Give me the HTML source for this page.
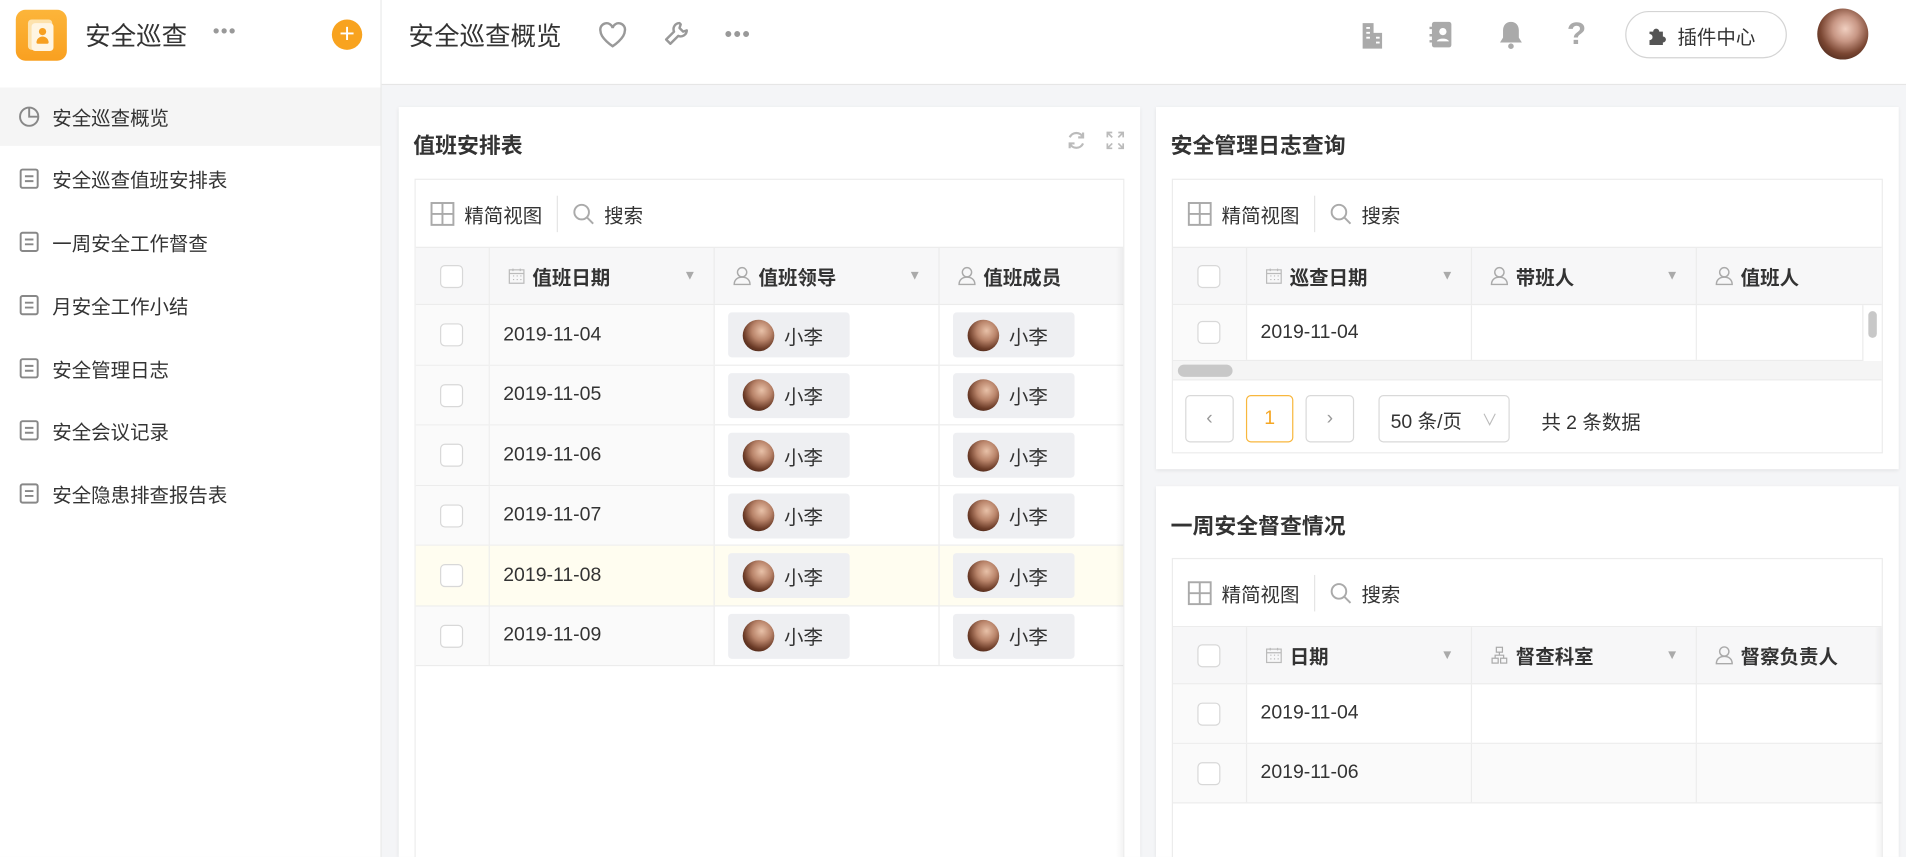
<!DOCTYPE html>
<html><head><meta charset="utf-8">
<style>
*{box-sizing:border-box;margin:0;padding:0}
html,body{width:1906px;height:857px;overflow:hidden;background:#f4f5f7}
body{font-family:"Liberation Sans","Noto Sans CJK SC",sans-serif;color:#333;position:relative}
#w{position:absolute;left:0;top:0;width:1568px;height:705px;transform:scale(1.21556);transform-origin:0 0;background:#f4f5f7;overflow:hidden}
.a{position:absolute}
.side{left:0;top:0;width:314px;height:705px;background:#fff;border-right:1px solid #e8e8e8}
.top{left:314px;top:0;width:1254px;height:70px;background:#fff;border-bottom:1px solid #e6e6e6}
.item{position:absolute;left:0;width:313px;height:48px;display:flex;align-items:center;font-size:16px;color:#333}
.item .ic{margin-left:15px;width:18px;height:18px;margin-right:10px}
.card{background:#fff;box-shadow:0 1px 3px rgba(0,0,0,.08);overflow:hidden}
.ct{font-size:18px;font-weight:bold;color:#333}
.tb{border:1px solid #ececec;background:#fff;overflow:hidden}
.tool{height:56px;display:flex;align-items:center;font-size:16px;color:#333;border-bottom:1px solid #ececec}
.hd{background:#f7f7f8;font-size:16px;font-weight:bold;color:#333}
.cell{position:absolute;top:0;height:100%;border-right:1px solid #ececec;display:flex;align-items:center}
.row{position:absolute;left:0;border-bottom:1px solid #ececec}
.cb{width:19px;height:19px;border:1px solid #d8d8d8;border-radius:4px;background:#fff;margin-left:20px}
.chip{display:flex;align-items:center;background:#eeeff2;border-radius:3px;height:37px;width:100px;margin-left:11px;font-size:16px}
.av{width:26px;height:26px;border-radius:50%;background:radial-gradient(circle at 60% 35%,#e8c1a8 0,#b9846a 35%,#6b3b27 65%,#2a140c 100%);margin:0 8px 0 12px}
.dt{font-size:16px;color:#333;margin-left:11px}
.pg{position:absolute;top:12px;height:39px;border:1px solid #d9d9d9;border-radius:4px;display:flex;align-items:center;justify-content:center;color:#999;font-size:16px}
.pi{margin-left:15px;width:15px;height:16px}
.ca{margin-left:15px;width:14px;height:14px}
</style></head><body><div id="w">

<div class="a side">
 <div class="a" style="left:13px;top:8px;width:42px;height:42px;border-radius:8px;background:linear-gradient(#fcb53a,#f9a020)">
  <div class="a" style="left:10px;top:8px;width:20px;height:25px;background:#fde2ad;border-radius:3px"></div>
  <div class="a" style="left:13px;top:11px;width:18px;height:23px;background:#fff5e2;border-radius:3px"></div>
  <div class="a" style="left:19px;top:15px;width:6px;height:6px;border-radius:50%;background:#f7a021"></div>
  <div class="a" style="left:17px;top:22px;width:10px;height:6px;border-radius:5px 5px 1px 1px;background:#f7a021"></div>
 </div>
 <div class="a" style="left:70px;top:14px;font-size:21px;color:#333">安全巡查</div>
 <div class="a" style="left:175px;top:22px;font-size:16px;color:#999;letter-spacing:1px;line-height:10px">•••</div>
 <div class="a" style="left:273px;top:16px;width:25px;height:25px;border-radius:50%;background:#f8a31f;color:#fff;font-size:22px;line-height:24px;text-align:center">+</div>
 <div class="item" style="top:72px;background:#f5f5f5"><svg class="ic" viewBox="0 0 18 18"><circle cx="9" cy="9" r="7.5" fill="none" stroke="#888" stroke-width="1.6"/><path d="M9 1.5V9H16.5" fill="none" stroke="#888" stroke-width="1.6"/></svg>安全巡查概览</div>
 <div class="item" style="top:123px"><svg class="ic" viewBox="0 0 18 18"><rect x="2" y="1.5" width="14" height="15" rx="1.5" fill="none" stroke="#888" stroke-width="1.6"/><path d="M5.5 7h7M5.5 11h7" stroke="#888" stroke-width="1.6"/></svg>安全巡查值班安排表</div>
 <div class="item" style="top:175px"><svg class="ic" viewBox="0 0 18 18"><rect x="2" y="1.5" width="14" height="15" rx="1.5" fill="none" stroke="#888" stroke-width="1.6"/><path d="M5.5 7h7M5.5 11h7" stroke="#888" stroke-width="1.6"/></svg>一周安全工作督查</div>
 <div class="item" style="top:227px"><svg class="ic" viewBox="0 0 18 18"><rect x="2" y="1.5" width="14" height="15" rx="1.5" fill="none" stroke="#888" stroke-width="1.6"/><path d="M5.5 7h7M5.5 11h7" stroke="#888" stroke-width="1.6"/></svg>月安全工作小结</div>
 <div class="item" style="top:279px"><svg class="ic" viewBox="0 0 18 18"><rect x="2" y="1.5" width="14" height="15" rx="1.5" fill="none" stroke="#888" stroke-width="1.6"/><path d="M5.5 7h7M5.5 11h7" stroke="#888" stroke-width="1.6"/></svg>安全管理日志</div>
 <div class="item" style="top:330px"><svg class="ic" viewBox="0 0 18 18"><rect x="2" y="1.5" width="14" height="15" rx="1.5" fill="none" stroke="#888" stroke-width="1.6"/><path d="M5.5 7h7M5.5 11h7" stroke="#888" stroke-width="1.6"/></svg>安全会议记录</div>
 <div class="item" style="top:382px"><svg class="ic" viewBox="0 0 18 18"><rect x="2" y="1.5" width="14" height="15" rx="1.5" fill="none" stroke="#888" stroke-width="1.6"/><path d="M5.5 7h7M5.5 11h7" stroke="#888" stroke-width="1.6"/></svg>安全隐患排查报告表</div>
</div>

<div class="a top">
 <div class="a" style="left:22px;top:14px;font-size:21px;color:#333">安全巡查概览</div>
 <svg class="a" style="left:178px;top:18px" width="24" height="22" viewBox="0 0 24 22"><path d="M12 20S2 13.5 2 7.5A5 5 0 0 1 12 5a5 5 0 0 1 10 2.5C22 13.5 12 20 12 20z" fill="none" stroke="#999" stroke-width="2"/></svg>
 <svg class="a" style="left:231px;top:17px" width="22" height="22" viewBox="0 0 22 22"><path d="M14 2a5 5 0 0 0-4.5 7L3 15.5 6.5 19 13 12.5A5 5 0 0 0 20 8l-3 1-3-3 1-3z" fill="none" stroke="#999" stroke-width="2" stroke-linejoin="round"/></svg>
 <div class="a" style="left:282px;top:23px;font-size:18px;color:#999;letter-spacing:1px;line-height:10px">•••</div>
 <svg class="a" style="left:804px;top:16px" width="22" height="25" viewBox="0 0 22 25"><path d="M3 24V3h9v8h7v13z" fill="#aaa"/><path d="M6 7h3M6 11h3M6 15h3M14 15h3M14 19h3" stroke="#fff" stroke-width="1.5"/></svg>
 <svg class="a" style="left:862px;top:17px" width="20" height="23" viewBox="0 0 20 23"><rect x="2" y="1" width="16" height="21" rx="2" fill="#aaa"/><circle cx="11" cy="9" r="3" fill="#fff"/><path d="M6 17c1-3 9-3 10 0" fill="#fff"/><path d="M0 6h4M0 12h4M0 17h4" stroke="#aaa" stroke-width="2"/></svg>
 <svg class="a" style="left:918px;top:16px" width="22" height="25" viewBox="0 0 22 25"><path d="M11 2c-4 0-6.5 3-6.5 7v6L2 19h18l-2.5-4V9c0-4-2.5-7-6.5-7z" fill="#aaa"/><circle cx="11" cy="22" r="2.3" fill="#aaa"/></svg>
 <div class="a" style="left:975px;top:12px;font-size:26px;font-weight:bold;color:#aaa">?</div>
 <div class="a" style="left:1023px;top:9px;width:133px;height:39px;border:1px solid #d4d4d4;border-radius:20px;display:flex;align-items:center;font-size:16px;color:#333">
  <svg style="margin:0 8px 0 16px" width="18" height="18" viewBox="0 0 18 18"><path d="M3 6h3a2.5 2.5 0 1 1 5 0h3v4a2.5 2.5 0 1 1 0 5v2H3v-4a2.5 2.5 0 1 0 0-5z" fill="#555"/></svg>插件中心</div>
 <div class="a" style="left:1181px;top:7px;width:42px;height:42px;border-radius:50%;background:radial-gradient(circle at 55% 40%,#f0cfc0 0,#c89785 30%,#7a4632 60%,#2b150d 100%)"></div>
</div>

<!-- card1 -->
<div class="a card" style="left:328px;top:88px;width:610px;height:617px">
 <div class="a ct" style="left:12px;top:18px">值班安排表</div>
 <svg class="a" style="left:549px;top:19px" width="17" height="17" viewBox="0 0 17 17"><path d="M14 6A6 6 0 0 0 3 6M3 11a6 6 0 0 0 11 0" fill="none" stroke="#bbb" stroke-width="1.8"/><path d="M14 2v4h-4M3 15v-4h4" fill="none" stroke="#bbb" stroke-width="1.8"/></svg>
 <svg class="a" style="left:581px;top:19px" width="17" height="17" viewBox="0 0 17 17"><path d="M2 6V2h4M11 2h4v4M15 11v4h-4M6 15H2v-4M2 2l4 4M15 2l-4 4M15 15l-4-4M2 15l4-4" fill="none" stroke="#bbb" stroke-width="1.4"/></svg>
 <div class="a tb" style="left:13px;top:59px;width:584px;height:560px">
  <div class="tool"><svg style="margin:0 8px 0 12px" width="20" height="20" viewBox="0 0 20 20"><rect x="1" y="1" width="18" height="18" fill="none" stroke="#aaa" stroke-width="1.6"/><path d="M10 1v18M1 10h18" stroke="#aaa" stroke-width="1.6"/></svg>精简视图<div style="width:1px;height:30px;background:#e5e5e5;margin:0 12px"></div><svg style="margin-right:8px" width="18" height="18" viewBox="0 0 18 18"><circle cx="7.5" cy="7.5" r="6" fill="none" stroke="#aaa" stroke-width="1.6"/><path d="M12 12l5 5" stroke="#aaa" stroke-width="1.6"/></svg>搜索</div>
  <div class="row hd" style="top:56px;width:584px;height:47px">
   <div class="cell" style="left:0;width:61px"><div class="cb"></div></div>
   <div class="cell" style="left:61px;width:185px"><svg class="ca" viewBox="0 0 14 14"><rect x="1" y="2" width="12" height="11" fill="none" stroke="#bbb"/><path d="M1 5h12M4 1v2M10 1v2M4 7h1M7 7h1M10 7h1M4 10h1M7 10h1M10 10h1" stroke="#bbb"/></svg><span style="margin-left:6px">值班日期</span><span style="position:absolute;right:14px;color:#aaa;font-size:11px">▼</span></div>
   <div class="cell" style="left:246px;width:185px"><svg class="pi" viewBox="0 0 15 16"><circle cx="7.5" cy="5" r="3.8" fill="none" stroke="#aaa" stroke-width="1.2"/><path d="M1 15c0-4 3-6 6.5-6s6.5 2 6.5 6z" fill="none" stroke="#aaa" stroke-width="1.2"/></svg><span style="margin-left:6px">值班领导</span><span style="position:absolute;right:14px;color:#aaa;font-size:11px">▼</span></div>
   <div class="cell" style="left:431px;width:153px;border:none"><svg class="pi" viewBox="0 0 15 16"><circle cx="7.5" cy="5" r="3.8" fill="none" stroke="#aaa" stroke-width="1.2"/><path d="M1 15c0-4 3-6 6.5-6s6.5 2 6.5 6z" fill="none" stroke="#aaa" stroke-width="1.2"/></svg><span style="margin-left:6px">值班成员</span></div>
  </div>
  <div id="rows1"></div>
  <div class="a" style="left:576px;top:56px;width:8px;height:504px;background:linear-gradient(90deg,rgba(0,0,0,0),rgba(0,0,0,.06))"></div>
 </div>
</div>

<!-- card2 -->
<div class="a card" style="left:951px;top:88px;width:611px;height:298px">
 <div class="a ct" style="left:12px;top:18px">安全管理日志查询</div>
 <div class="a tb" style="left:13px;top:59px;width:585px;height:226px">
  <div class="tool"><svg style="margin:0 8px 0 12px" width="20" height="20" viewBox="0 0 20 20"><rect x="1" y="1" width="18" height="18" fill="none" stroke="#aaa" stroke-width="1.6"/><path d="M10 1v18M1 10h18" stroke="#aaa" stroke-width="1.6"/></svg>精简视图<div style="width:1px;height:30px;background:#e5e5e5;margin:0 12px"></div><svg style="margin-right:8px" width="18" height="18" viewBox="0 0 18 18"><circle cx="7.5" cy="7.5" r="6" fill="none" stroke="#aaa" stroke-width="1.6"/><path d="M12 12l5 5" stroke="#aaa" stroke-width="1.6"/></svg>搜索</div>
  <div class="row hd" style="top:56px;width:585px;height:47px">
   <div class="cell" style="left:0;width:61px"><div class="cb"></div></div>
   <div class="cell" style="left:61px;width:185px"><svg class="ca" viewBox="0 0 14 14"><rect x="1" y="2" width="12" height="11" fill="none" stroke="#bbb"/><path d="M1 5h12M4 1v2M10 1v2M4 7h1M7 7h1M10 7h1M4 10h1M7 10h1M10 10h1" stroke="#bbb"/></svg><span style="margin-left:6px">巡查日期</span><span style="position:absolute;right:14px;color:#aaa;font-size:11px">▼</span></div>
   <div class="cell" style="left:246px;width:185px"><svg class="pi" viewBox="0 0 15 16"><circle cx="7.5" cy="5" r="3.8" fill="none" stroke="#aaa" stroke-width="1.2"/><path d="M1 15c0-4 3-6 6.5-6s6.5 2 6.5 6z" fill="none" stroke="#aaa" stroke-width="1.2"/></svg><span style="margin-left:6px">带班人</span><span style="position:absolute;right:14px;color:#aaa;font-size:11px">▼</span></div>
   <div class="cell" style="left:431px;width:154px;border:none"><svg class="pi" viewBox="0 0 15 16"><circle cx="7.5" cy="5" r="3.8" fill="none" stroke="#aaa" stroke-width="1.2"/><path d="M1 15c0-4 3-6 6.5-6s6.5 2 6.5 6z" fill="none" stroke="#aaa" stroke-width="1.2"/></svg><span style="margin-left:6px">值班人</span></div>
  </div>
  <div class="row" style="top:103px;width:568px;height:46px;border-right:1px solid #ececec">
   <div class="cell" style="left:0;width:61px;background:#fafafa"><div class="cb"></div></div>
   <div class="cell" style="left:61px;width:185px"><span class="dt">2019-11-04</span></div>
   <div class="cell" style="left:246px;width:185px"></div>
  </div>
  <div class="a" style="left:572px;top:108px;width:7px;height:22px;border-radius:4px;background:#c8c8c8"></div>
  <div class="a" style="left:0;top:149px;width:585px;height:16px;background:#f5f5f5;border-bottom:1px solid #ececec"><div class="a" style="left:4px;top:3px;width:45px;height:10px;border-radius:5px;background:#c8c8c8"></div></div>
  <div class="a" style="left:0;top:165px;width:585px;height:60px">
   <div class="pg" style="left:10px;width:40px">‹</div>
   <div class="pg" style="left:60px;width:39px;border-color:#f8b73e;color:#f5a623">1</div>
   <div class="pg" style="left:109px;width:40px">›</div>
   <div class="pg" style="left:169px;width:108px;color:#333;justify-content:flex-start;padding-left:9px">50 条/页<span style="position:absolute;right:9px;color:#bbb;font-size:13px">∨</span></div>
   <div class="a" style="left:303px;top:21px;font-size:16px;color:#333">共 2 条数据</div>
  </div>
 </div>
</div>

<!-- card3 -->
<div class="a card" style="left:951px;top:400px;width:611px;height:305px">
 <div class="a ct" style="left:12px;top:19px">一周安全督查情况</div>
 <div class="a tb" style="left:13px;top:59px;width:585px;height:260px">
  <div class="tool"><svg style="margin:0 8px 0 12px" width="20" height="20" viewBox="0 0 20 20"><rect x="1" y="1" width="18" height="18" fill="none" stroke="#aaa" stroke-width="1.6"/><path d="M10 1v18M1 10h18" stroke="#aaa" stroke-width="1.6"/></svg>精简视图<div style="width:1px;height:30px;background:#e5e5e5;margin:0 12px"></div><svg style="margin-right:8px" width="18" height="18" viewBox="0 0 18 18"><circle cx="7.5" cy="7.5" r="6" fill="none" stroke="#aaa" stroke-width="1.6"/><path d="M12 12l5 5" stroke="#aaa" stroke-width="1.6"/></svg>搜索</div>
  <div class="row hd" style="top:56px;width:585px;height:47px">
   <div class="cell" style="left:0;width:61px"><div class="cb"></div></div>
   <div class="cell" style="left:61px;width:185px"><svg class="ca" viewBox="0 0 14 14"><rect x="1" y="2" width="12" height="11" fill="none" stroke="#bbb"/><path d="M1 5h12M4 1v2M10 1v2M4 7h1M7 7h1M10 7h1M4 10h1M7 10h1M10 10h1" stroke="#bbb"/></svg><span style="margin-left:6px">日期</span><span style="position:absolute;right:14px;color:#aaa;font-size:11px">▼</span></div>
   <div class="cell" style="left:246px;width:185px"><svg class="pi" viewBox="0 0 15 16"><rect x="5" y="1.5" width="5" height="4" fill="none" stroke="#aaa"/><rect x="1.5" y="10.5" width="5" height="4" fill="none" stroke="#aaa"/><rect x="8.5" y="10.5" width="5" height="4" fill="none" stroke="#aaa"/><path d="M7.5 5.5v2.5M4 10.5V8h7v2.5" fill="none" stroke="#aaa"/></svg><span style="margin-left:6px">督查科室</span><span style="position:absolute;right:14px;color:#aaa;font-size:11px">▼</span></div>
   <div class="cell" style="left:431px;width:154px;border:none"><svg class="pi" viewBox="0 0 15 16"><circle cx="7.5" cy="5" r="3.8" fill="none" stroke="#aaa" stroke-width="1.2"/><path d="M1 15c0-4 3-6 6.5-6s6.5 2 6.5 6z" fill="none" stroke="#aaa" stroke-width="1.2"/></svg><span style="margin-left:6px">督察负责人</span></div>
  </div>
  <div class="row" style="top:103px;width:585px;height:49px">
   <div class="cell" style="left:0;width:61px;background:#fafafa"><div class="cb"></div></div>
   <div class="cell" style="left:61px;width:185px"><span class="dt">2019-11-04</span></div>
   <div class="cell" style="left:246px;width:185px"></div>
  </div>
  <div class="row" style="top:152px;width:585px;height:49px;background:#fafafa">
   <div class="cell" style="left:0;width:61px"><div class="cb"></div></div>
   <div class="cell" style="left:61px;width:185px"><span class="dt">2019-11-06</span></div>
   <div class="cell" style="left:246px;width:185px"></div>
  </div>
  <div class="a" style="left:577px;top:56px;width:8px;height:204px;background:linear-gradient(90deg,rgba(0,0,0,0),rgba(0,0,0,.06))"></div>
 </div>
</div>
</div>
<script>
var h='',d=['04','05','06','07','08','09'];
for(var i=0;i<6;i++){var t=103+Math.round(i*49.5),t2=103+Math.round((i+1)*49.5),bg=i==4?'#fffdf0':'#fff';
h+='<div class="row" style="top:'+t+'px;width:584px;height:'+(t2-t)+'px;background:'+bg+'">'+
'<div class="cell" style="left:0;width:61px;background:'+(i==4?'#fffdf0':'#fafafa')+'"><div class="cb"></div></div>'+
'<div class="cell" style="left:61px;width:185px;background:'+(i==4?'#fffdf0':'#fafafa')+'"><span class="dt">2019-11-'+d[i]+'</span></div>'+
'<div class="cell" style="left:246px;width:185px"><div class="chip"><div class="av"></div>小李</div></div>'+
'<div class="cell" style="left:431px;width:153px;border:none"><div class="chip"><div class="av"></div>小李</div></div></div>';}
document.getElementById('rows1').outerHTML=h;
</script>
</body></html>
